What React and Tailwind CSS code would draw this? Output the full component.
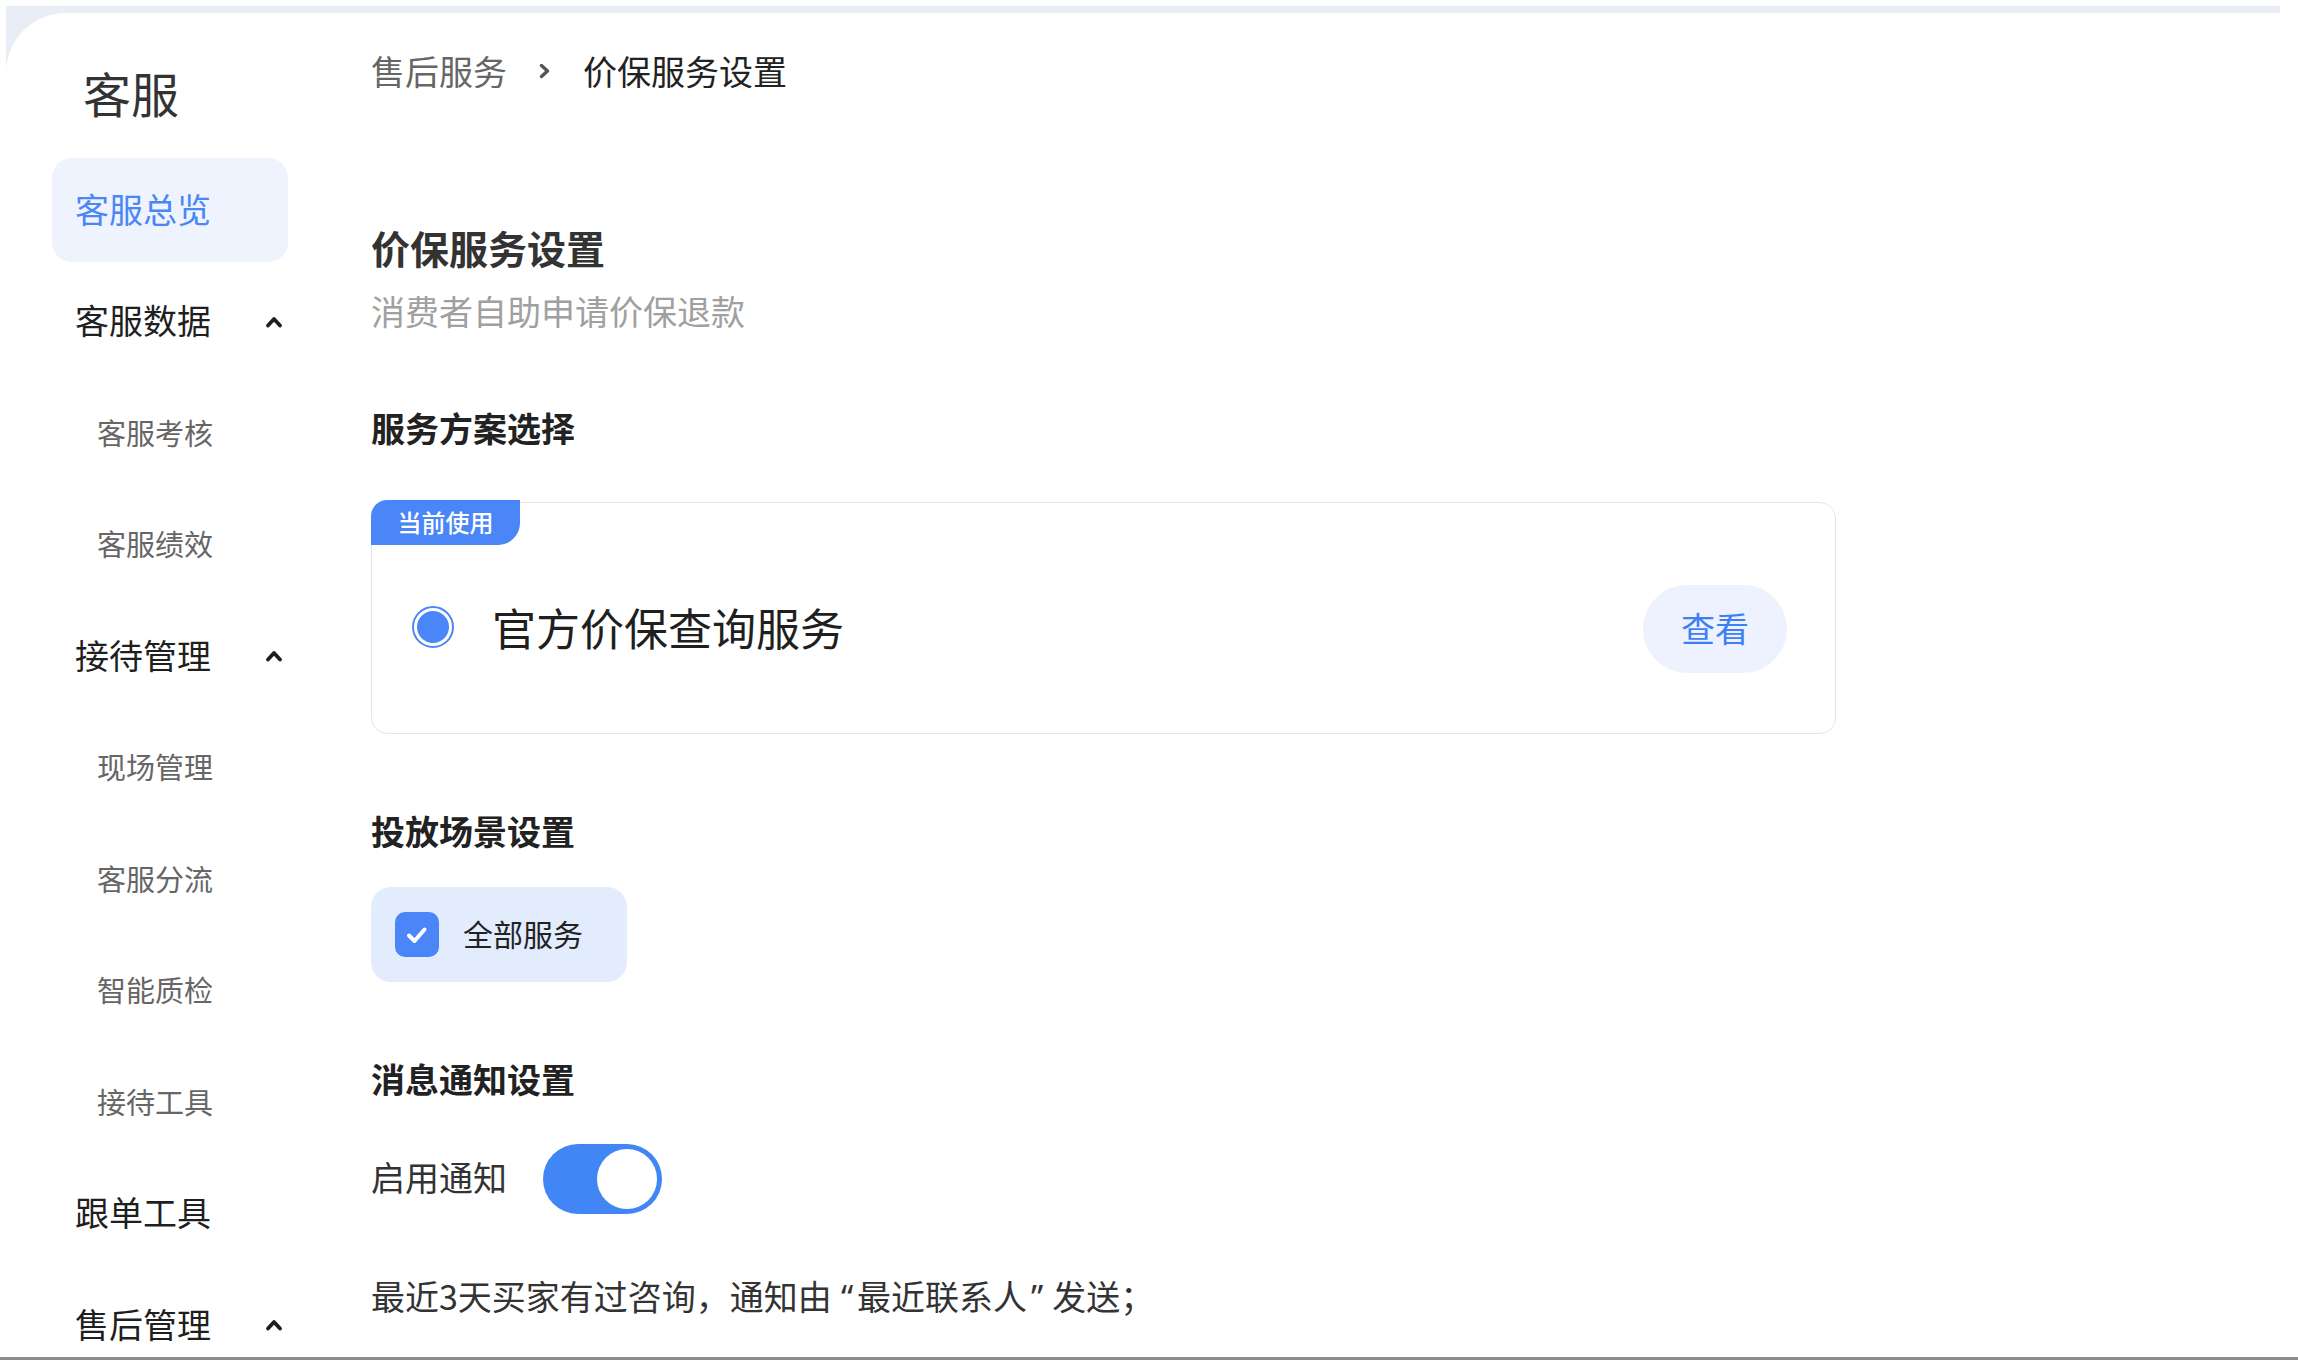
import React from "react";

const navItems = [
  { label: "客服总览", kind: "active" },
  { label: "客服数据", kind: "group", chevron: true },
  { label: "客服考核", kind: "sub" },
  { label: "客服绩效", kind: "sub" },
  { label: "接待管理", kind: "group", chevron: true },
  { label: "现场管理", kind: "sub" },
  { label: "客服分流", kind: "sub" },
  { label: "智能质检", kind: "sub" },
  { label: "接待工具", kind: "sub" },
  { label: "跟单工具", kind: "group" },
  { label: "售后管理", kind: "group", chevron: true },
];

function ChevronUp() {
  return (
    <svg width="18" height="14" viewBox="0 0 18 14" fill="none">
      <polyline
        points="3,10.5 9,4 15,10.5"
        stroke="#1f1f1f"
        strokeWidth="3.8"
        strokeLinecap="round"
        strokeLinejoin="round"
      />
    </svg>
  );
}

function ChevronRight() {
  return (
    <svg width="13" height="16" viewBox="0 0 13 16" fill="none">
      <polyline
        points="3.5,2.5 9.5,8 3.5,13.5"
        stroke="#555"
        strokeWidth="3.4"
        strokeLinecap="round"
        strokeLinejoin="round"
      />
    </svg>
  );
}

// Proportional quote marks with a little breathing room, as set in CJK text
function OpenQ() {
  return <span className="ml-[9px] mr-[4px] font-['Noto_Sans',sans-serif]">“</span>;
}
function CloseQ() {
  return <span className="ml-[4px] mr-[9px] font-['Noto_Sans',sans-serif]">”</span>;
}

function NavItem({ item }) {
  if (item.kind === "active") {
    return (
      <div className="h-[104px] flex items-center rounded-[20px] bg-[#eef3fe] pl-[23px] pb-[3px] text-[34px] leading-[44px] text-[#4a87f5]">
        {item.label}
      </div>
    );
  }
  if (item.kind === "group") {
    return (
      <div className="h-[104px] flex items-center justify-between pl-[23px] pr-[5px] text-[34px] leading-[44px] text-[#1f1f1f]">
        <span className="pb-[3px]">{item.label}</span>
        {item.chevron && <ChevronUp />}
      </div>
    );
  }
  return (
    <div className="h-[104px] flex items-center pl-[45px] pb-[3px] text-[29px] leading-[40px] text-[#666]">
      {item.label}
    </div>
  );
}

function Sidebar() {
  return (
    <aside className="w-[282px] shrink-0 pl-[46px]">
      <div className="mt-[49px] pl-[31px] text-[48px] leading-[60px] text-[#333]">客服</div>
      <nav className="mt-[36px] flex flex-col gap-[7.5px]">
        {navItems.map((item) => (
          <NavItem key={item.label} item={item} />
        ))}
      </nav>
    </aside>
  );
}

function PlanCard() {
  return (
    <div className="relative mt-[52px] w-[1465px] h-[232px] rounded-[16px] border border-[#e4e6ed] bg-white">
      <div className="absolute -top-[3px] -left-px w-[149px] h-[45px] flex items-center justify-center rounded-tl-[16px] rounded-br-[22px] bg-[#4a86f7] pb-[2px] text-[24px] leading-[30px] font-medium text-white">
        当前使用
      </div>
      <div className="mt-[82px] h-[88px] flex items-center pl-[40px] pr-[48px]">
        <div className="w-[42px] h-[42px] rounded-full border-2 border-[#4a86f7] p-[3px] shrink-0 -mt-[4px]">
          <div className="w-full h-full rounded-full bg-[#4a86f7]" />
        </div>
        <div className="ml-[38px] pb-[4px] text-[44px] leading-[56px] text-[#1f1f1f]">官方价保查询服务</div>
        <button className="ml-auto w-[144px] h-[88px] rounded-full bg-[#edf2fe] pb-[3px] text-[34px] leading-[44px] text-[#3f7ff5]">
          查看
        </button>
      </div>
    </div>
  );
}

function SceneCheckbox() {
  return (
    <div className="mt-[34px] w-[256px] h-[95px] flex items-center rounded-[20px] bg-[#e3ecfd] pl-[24px]">
      <div className="w-[44px] h-[45px] rounded-[10px] bg-[#4a86f7] flex items-center justify-center">
        <svg width="30" height="30" viewBox="0 0 30 30" fill="none">
          <polyline
            points="7,15.5 12.5,21 22.5,9.5"
            stroke="#fff"
            strokeWidth="4"
            strokeLinecap="round"
            strokeLinejoin="round"
          />
        </svg>
      </div>
      <span className="ml-[24px] pb-[3px] text-[30px] leading-[40px] text-[#222]">全部服务</span>
    </div>
  );
}

function Toggle() {
  return (
    <div className="w-[119px] h-[70px] rounded-full bg-[#4285f4] flex items-center justify-end pr-[5px]">
      <div className="w-[60px] h-[60px] rounded-full bg-white" />
    </div>
  );
}

function Main() {
  return (
    <main className="ml-[83px] flex-1 min-w-0">
      <div className="mt-[34px] h-[48px] flex items-center text-[34px] leading-[48px]">
        <span className="text-[#666]">售后服务</span>
        <span className="ml-[31px] mr-[32px] flex items-center">
          <ChevronRight />
        </span>
        <span className="text-[#222]">价保服务设置</span>
      </div>

      <h1 className="mt-[128px] text-[39px] leading-[48px] font-bold text-[#333]">价保服务设置</h1>
      <p className="mt-[18px] text-[34px] leading-[44px] text-[#a0a0a0]">消费者自助申请价保退款</p>

      <h2 className="mt-[73px] text-[34px] leading-[44px] font-bold text-[#222]">服务方案选择</h2>
      <PlanCard />

      <h2 className="mt-[75px] text-[34px] leading-[44px] font-bold text-[#222]">投放场景设置</h2>
      <SceneCheckbox />

      <h2 className="mt-[75px] text-[34px] leading-[44px] font-bold text-[#222]">消息通知设置</h2>
      <div className="mt-[43px] h-[70px] flex items-center">
        <span className="pb-[4px] text-[34px] leading-[44px] text-[#333]">启用通知</span>
        <div className="ml-[36px]">
          <Toggle />
        </div>
      </div>

      <p className="mt-[60px] text-[34px] leading-[44px] text-[#333]">
        最近3天买家有过咨询，通知由<OpenQ />最近联系人<CloseQ />发送；
      </p>
      <p className="mt-[36px] pl-[482px] text-[34px] leading-[44px] text-[#333]">
        其他情况默认由<OpenQ />主账号<CloseQ />发送
      </p>
    </main>
  );
}

export default function App() {
  return (
    <div className="w-[2298px] h-[1360px] flex flex-col overflow-hidden bg-white font-['Noto_Sans_CJK_SC','Noto_Sans',sans-serif]">
      <div className="flex-1 min-h-0 pt-[6px] pl-[6px] pr-[18px]">
        <div className="h-full bg-[#e9edf5] pt-[7px]">
          <div className="h-full flex overflow-hidden rounded-tl-[60px] bg-white">
            <Sidebar />
            <Main />
          </div>
        </div>
      </div>
      <div className="h-[3px] shrink-0 bg-[#8c8c8c]" />
    </div>
  );
}
